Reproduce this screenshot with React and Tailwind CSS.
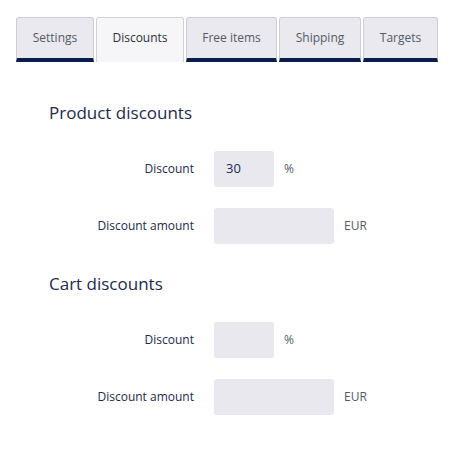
import React from "react";

const tabs = [
  { t: "Settings", w: "w-[78px]" },
  { t: "Discounts", w: "w-[88px]" },
  { t: "Free items", w: "w-[91px]" },
  { t: "Shipping", w: "w-[82px]" },
  { t: "Targets", w: "w-[75px]" },
];

function Row({ label, value, wide, unit }) {
  return (
    <div className="flex items-center pl-[49px]">
      <div className="w-[145px] text-right text-[12px] text-[#1c2a4d]">{label}</div>
      <div
        className={`ml-[20px] h-[36px] rounded-[3px] bg-[#e8e8ee] flex items-center pl-[12px] text-[13px] text-[#1c2a4d] ${wide ? "w-[120px]" : "w-[60px]"}`}
      >
        {value}
      </div>
      <div className="ml-[10px] text-[12px] text-[#555a66]">{unit}</div>
    </div>
  );
}

function Section({ title, discount }) {
  return (
    <div>
      <h2 className="text-[17px] leading-[24px] text-[#1c2a4d] pl-[49px]">{title}</h2>
      <div className="mt-[26px] flex flex-col gap-[21px]">
        <Row label="Discount" value={discount} unit="%" />
        <Row label="Discount amount" value="" wide unit="EUR" />
      </div>
    </div>
  );
}

export default function App() {
  return (
    <div
      className="w-[469px] h-[460px] bg-white"
      style={{ fontFamily: '"Open Sans", "Noto Sans", sans-serif' }}
    >
      <div className="pt-[17px] pl-[16px] flex gap-[2px]">
        {tabs.map(({ t, w }) => {
          const active = t === "Discounts";
          return active ? (
            <div
              key={t}
              className={`${w} h-[45px] pb-[4px] flex items-center justify-center border border-b-0 border-[#d0d0d8] rounded-t-[3px] bg-[#f6f6f9] text-[12px] text-[#2a2f3a]`}
            >
              {t}
            </div>
          ) : (
            <div
              key={t}
              className={`${w} h-[45px] flex items-center justify-center border border-b-0 border-[#cdcdd5] rounded-t-[3px] bg-[#e9e9ef] text-[12px] text-[#555a66] border-b-[4px] border-b-[#0b1d4a]`}
            >
              {t}
            </div>
          );
        })}
      </div>
      <div className="mt-[39px]">
        <Section title="Product discounts" discount="30" />
        <div className="mt-[28px]">
          <Section title="Cart discounts" discount="" />
        </div>
      </div>
    </div>
  );
}
